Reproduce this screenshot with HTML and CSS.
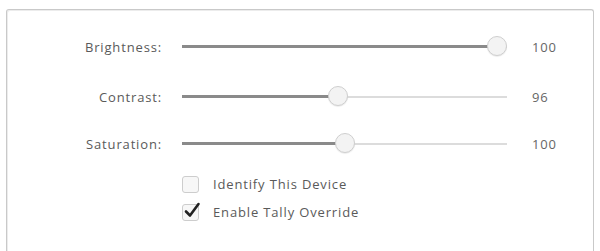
FILE: index.html
```html
<!DOCTYPE html>
<html>
<head>
<meta charset="utf-8">
<link rel="stylesheet" href="styles.css">
</head>
<body>
<div class="panel">
  <div class="sliders">
    <div class="label">Brightness:</div>
    <div class="slider" style="--p:1"><div class="track"></div><div class="fill"></div><div class="thumb"></div></div>
    <div class="value">100</div>

    <div class="label">Contrast:</div>
    <div class="slider" style="--p:0.48"><div class="track"></div><div class="fill"></div><div class="thumb"></div></div>
    <div class="value">96</div>

    <div class="label">Saturation:</div>
    <div class="slider" style="--p:0.5"><div class="track"></div><div class="fill"></div><div class="thumb"></div></div>
    <div class="value">100</div>
  </div>
  <div class="checks">
    <label class="check"><span class="box"></span><span class="text">Identify This Device</span></label>
    <label class="check"><span class="box"><svg class="tick" viewBox="0 0 20 20" width="20" height="20"><path d="M4 10.5 L8 14.5 L16.5 3" fill="none" stroke="#222" stroke-width="2.6" stroke-linecap="round" stroke-linejoin="round"/></svg></span><span class="text">Enable Tally Override</span></label>
  </div>
</div>
</body>
</html>
```
FILE: styles.css
```css
html, body {
  margin: 0;
  padding: 0;
  background: #fff;
}
body {
  font-family: "Open Sans", "Liberation Sans", sans-serif;
  font-size: 13px;
  letter-spacing: 0.85px;
  color: #5a5a5a;
  width: 600px;
  height: 251px;
  overflow: hidden;
}
.panel {
  margin: 9px 0 0 6px;
  width: 588px;
  height: 242px;
  border: 1px solid #c9c9c9;
  border-bottom: none;
  border-radius: 3px 3px 0 0;
  box-shadow: inset 1px 1px 0 #ececec;
  box-sizing: border-box;
}
.sliders {
  display: grid;
  grid-template-columns: 155px 325px auto;
  grid-template-rows: 52px 48px 46px;
  margin-top: 11px;
  align-items: center;
}
.label {
  text-align: right;
  color: #5a5a5a;
}
.slider {
  position: relative;
  height: 20px;
  margin-left: 20px;
  width: 325px;
}
.track {
  position: absolute;
  left: 0;
  right: 0;
  top: 9px;
  height: 2px;
  background: #dcdcdc;
}
.fill {
  position: absolute;
  left: 0;
  top: 8px;
  height: 3px;
  background: #8a8a8a;
  width: calc(10px + var(--p) * (100% - 20px));
}
.thumb {
  position: absolute;
  top: -1px;
  left: calc(var(--p) * (100% - 20px));
  width: 20px;
  height: 20px;
  border-radius: 50%;
  background: #f3f3f3;
  border: 1px solid #cfcfcf;
  box-sizing: border-box;
  box-shadow: 0 1px 1px rgba(0,0,0,0.08);
}
.value {
  margin-left: 45px;
  color: #666;
}
.checks {
  display: flex;
  flex-direction: column;
  margin-top: 3px;
  padding-left: 175px;
}
.check {
  display: flex;
  align-items: center;
  height: 28px;
}
.box {
  position: relative;
  width: 17px;
  height: 17px;
  border: 1px solid #cdcdcd;
  border-radius: 3px;
  background: #f7f7f7;
  box-sizing: border-box;
  flex: none;
}
.tick {
  position: absolute;
  left: -1px;
  top: -4px;
}
.text {
  margin-left: 14px;
  color: #5a5a5a;
}
```
